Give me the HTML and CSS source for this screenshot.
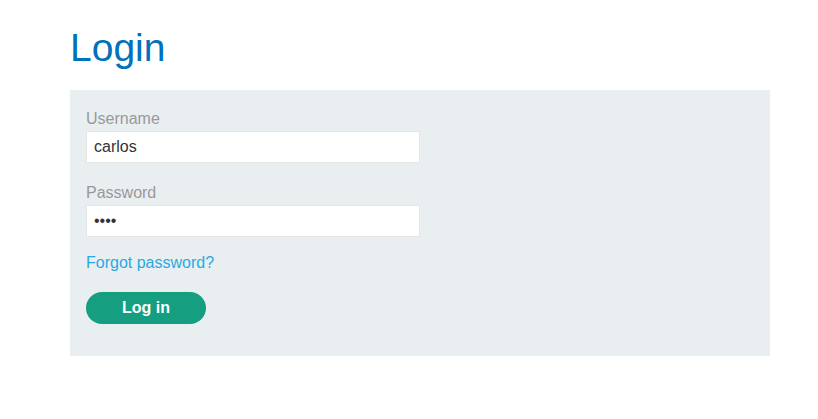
FILE: index.html
```html
<!DOCTYPE html>
<html>
<head>
<meta charset="utf-8">
<link rel="stylesheet" href="styles.css">
</head>
<body>
<div class="container">
  <h1 class="title">Login</h1>
  <section class="panel">
    <form class="login-form">
      <label class="field-label">Username</label>
      <input class="field-input" type="text" value="carlos">
      <label class="field-label">Password</label>
      <input class="field-input" type="password" value="abcd">
      <a class="forgot" href="#">Forgot password?</a>
      <button class="btn" type="button">Log in</button>
    </form>
  </section>
</div>
</body>
</html>
```
FILE: styles.css
```css
* { box-sizing: border-box; }
html, body { margin: 0; padding: 0; background: #fff; }
body { font-family: "Liberation Sans", Arial, sans-serif; font-size: 16px; color: #333; }
.container { width: 700px; margin-left: 70px; padding-top: 23px; }
.title { margin: 0; height: 67px; font-size: 39px; font-weight: normal; line-height: 50px; color: #0071bc; }
.panel { background: #e9eef1; padding: 16px 16px 32px; }
.login-form { display: flex; flex-direction: column; align-items: flex-start; }
.field-label { display: block; line-height: 24px; height: 25px; padding-top: 1px; color: #999; }
.field-input { width: 334px; height: 32px; border: 1px solid #e6e6e6; background: #fff; padding: 0 7px; font-family: inherit; font-size: 16px; color: #333; margin: 0 0 17px; outline: none; }
.forgot { display: block; line-height: 24px; color: #29a9e1; text-decoration: none; margin-top: -3px; }
.btn { margin-top: 17px; width: 120px; height: 32px; border: 0; border-radius: 16px; background: #159e80; color: #fff; font-family: inherit; font-weight: bold; font-size: 16px; padding: 0; }
```
